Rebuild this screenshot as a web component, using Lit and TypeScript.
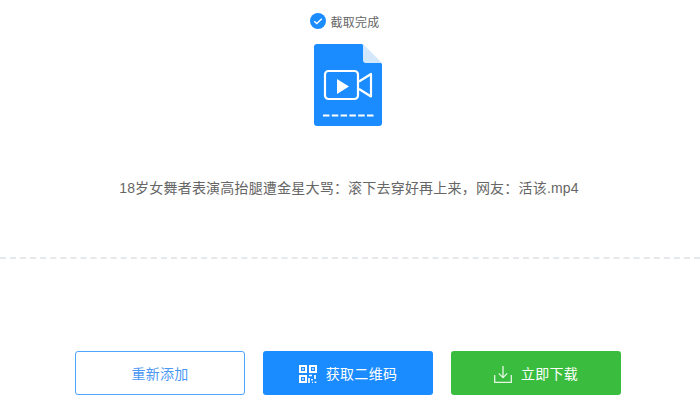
import { LitElement, html, css } from "lit";
import { customElement } from "lit/decorators.js";

@customElement("app-root")
export class AppRoot extends LitElement {
  static styles = css`
    :host {
      display: block;
      width: 700px;
      height: 410px;
      background: #fff;
      overflow: hidden;
      font-family: "Liberation Sans", "Noto Sans CJK SC", sans-serif;
    }
    .top {
      height: 259px;
      box-sizing: border-box;
      border-bottom: 2px dashed #e6e9ec;
      padding: 12px 4px 0 0;
      display: flex;
      flex-direction: column;
      align-items: center;
    }
    .status {
      display: flex;
      align-items: center;
      gap: 5px;
      height: 18px;
      font-size: 12px;
      letter-spacing: 0.2px;
      color: #666;
      margin-right: 7px;
    }
    .file {
      display: block;
      margin-top: 14px;
    }
    .name {
      margin: 52px 0 0 2px;
      font-size: 14px;
      line-height: 20px;
      letter-spacing: 0.2px;
      color: #666;
    }
    .actions {
      display: flex;
      justify-content: center;
      gap: 18px;
      padding: 92px 4px 0 0;
    }
    .btn {
      width: 170px;
      height: 44px;
      box-sizing: border-box;
      border-radius: 3px;
      display: flex;
      align-items: center;
      justify-content: center;
      gap: 9px;
      font-size: 14px;
      letter-spacing: 0.3px;
      color: #fff;
    }
    .btn svg { margin-top: 2px; }
    .outline { background: #fff; border: 1px solid #4ea5ff; color: #4b97f5; }
    .blue { background: #1a8cff; }
    .green { background: #3abd3f; }
    svg { display: block; flex: none; }
  `;

  render() {
    return html`
      <div class="top">
        <div class="status">
          <svg width="16" height="16" viewBox="0 0 16 16">
            <circle cx="8" cy="8" r="8" fill="#1a8cff" />
            <path d="M4.2 8.2l2.6 2.4 5-4.8" fill="none" stroke="#fff" stroke-width="1.4" />
          </svg>
          <span>截取完成</span>
        </div>
        <svg class="file" width="68" height="82" viewBox="0 0 68 82">
          <path d="M3 0H48L68 20V79a3 3 0 0 1-3 3H3a3 3 0 0 1-3-3V3a3 3 0 0 1 3-3z" fill="#1a8cff" />
          <path d="M49 0L68 19V19H52a3 3 0 0 1-3-3z" fill="#d4e8fb" />
          <rect x="11" y="27" width="33" height="28" rx="3.5" fill="none" stroke="#fff" stroke-width="2.2" />
          <path d="M45 37.5L57 30V52.5L45 45" fill="none" stroke="#fff" stroke-width="2.2" stroke-linejoin="round" />
          <path d="M23 35L35 42.5L23 50z" fill="#fff" />
          <path d="M9 71.5H60.5" stroke="#fff" stroke-width="2" stroke-dasharray="6.5 2.3" fill="none" />
        </svg>
        <div class="name">18岁女舞者表演高抬腿遭金星大骂：滚下去穿好再上来，网友：活该.mp4</div>
      </div>
      <div class="actions">
        <div class="btn outline">重新添加</div>
        <div class="btn blue">
          <svg width="18" height="18" viewBox="0 0 18 18" fill="none" stroke="#fff" stroke-width="2">
            <rect x="1" y="1" width="6" height="6" />
            <rect x="11" y="1" width="6" height="6" />
            <rect x="1" y="11" width="6" height="6" />
            <path d="M3.2 4h1.6M13.2 4h1.6M3.2 14h1.6" stroke-width="1.6" />
            <path d="M10 10.5h3M16 10v4M10 13v5M13 14v1.5M13 17.5h1M16.5 16.5V18" stroke-width="1.7" />
          </svg>
          <span>获取二维码</span>
        </div>
        <div class="btn green">
          <svg width="18" height="18" viewBox="0 0 18 18" fill="none" stroke="#e6f6e6" stroke-width="1.3">
            <path d="M.7 10v7.3h16.6V10" />
            <path d="M9 1v11.5M4.8 8.4L9 12.6l4.2-4.2" />
          </svg>
          <span>立即下载</span>
        </div>
      </div>
    `;
  }
}
